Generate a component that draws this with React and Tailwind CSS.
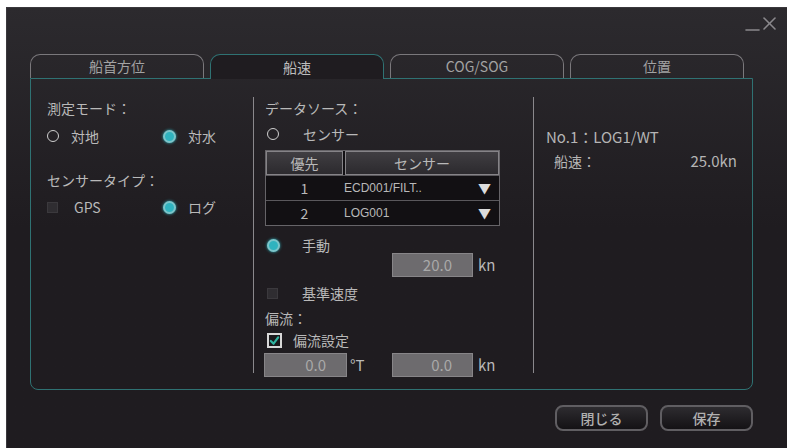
import { Fragment } from 'react'

const FONT = { fontFamily: '"Noto Sans CJK JP", "Noto Sans", sans-serif' }

const TABS = ['船首方位', '船速', 'COG/SOG', '位置']

const SENSORS = [
  { no: 1, name: 'ECD001/FILT..' },
  { no: 2, name: 'LOG001' },
]

export default function App() {
  return (
    <div className="w-[787px] h-[448px] bg-white pl-[6px] pt-[7px] overflow-hidden" style={FONT}>
      <div className="w-[781px] h-[441px] flex flex-col bg-gradient-to-b from-[#2c2a2e] via-[#1f1c20] to-[#1f1c20] border-l border-t border-[#3a383c]">
        {/* Title bar */}
        <div className="h-[46px] flex justify-end pr-[9px] pt-[5px]">
          <WindowControls />
        </div>

        {/* Tabs */}
        <div className="relative z-10 flex items-end gap-[6px] pl-[23px] h-[24px]">
          {TABS.map((t, i) => (
            <div
              key={t}
              className={`w-[174px] flex items-center justify-center rounded-t-[10px] border border-b-0 text-[14px] ${
                i === 1
                  ? 'h-[25px] -mb-px bg-[#1f1c20] border-[#2f7273] text-[#bdbdbd]'
                  : 'h-[24px] border-[#7a787c] text-[#a3a3a3]'
              }`}
            >
              {t}
            </div>
          ))}
        </div>

        {/* Panel */}
        <div className="ml-[23px] w-[723px] h-[312px] flex border border-[#2f7273] rounded-b-[8px] text-[14px] text-[#b9b9b9]">
          <LeftColumn />
          <div className="w-px h-[276px] mt-[18px] bg-[#8a888c]" />
          <MiddleColumn />
          <div className="w-px h-[276px] mt-[18px] bg-[#8a888c]" />
          <RightColumn />
        </div>

        {/* Buttons */}
        <div className="flex justify-end gap-[12px] pr-[34px] mt-[15px]">
          <Button label="閉じる" />
          <Button label="保存" />
        </div>
      </div>
    </div>
  )
}

function LeftColumn() {
  return (
    <div className="w-[222px] pl-[16px] pt-[19px] flex flex-col">
      <div className="h-[20px] flex items-center">測定モード：</div>
      <div className="mt-[8px] h-[20px] flex items-center">
        <div className="w-[116px] flex items-center gap-[12px]">
          <Radio />
          <span>対地</span>
        </div>
        <div className="flex items-center gap-[12px]">
          <Radio checked />
          <span>対水</span>
        </div>
      </div>
      <div className="mt-[24px] h-[20px] flex items-center">センサータイプ：</div>
      <div className="mt-[7px] h-[20px] flex items-center">
        <div className="w-[116px] flex items-center gap-[16px]">
          <DisabledBox />
          <span>GPS</span>
        </div>
        <div className="flex items-center gap-[12px]">
          <Radio checked />
          <span>ログ</span>
        </div>
      </div>
    </div>
  )
}

function MiddleColumn() {
  return (
    <div className="w-[279px] pl-[11px] pt-[19px] flex flex-col">
      <div className="h-[20px] flex items-center">データソース：</div>
      <div className="mt-[6px] h-[20px] flex items-center gap-[24px] pl-[2px]">
        <Radio />
        <span>センサー</span>
      </div>

      {/* Sensor priority table */}
      <div className="mt-[6px] w-[235px] border border-[#666468] bg-[#121013] flex flex-col">
        <div className="flex h-[24px] gap-[2px] bg-[#121013]">
          <div className="w-[77px] flex items-center justify-center border border-[#858387] bg-gradient-to-b from-[#403e42] to-[#2c2a2e]">優先</div>
          <div className="flex-1 flex items-center justify-center border border-[#858387] bg-gradient-to-b from-[#403e42] to-[#2c2a2e]">センサー</div>
        </div>
        {SENSORS.map((s) => (
          <Fragment key={s.no}>
            <div className="h-px bg-[#5a585c]" />
            <div className="flex h-[24px] items-center text-[#b9b9b9]">
              <div className="w-[77px] text-center text-[14px]">{s.no}</div>
              <div className="flex-1 pl-[1px] text-[12px]" style={{ fontFamily: '"Liberation Sans", Arial, sans-serif' }}>
                {s.name}
              </div>
              <span className="pr-[8px] text-[13px] text-[#dcdcdc]">▼</span>
            </div>
          </Fragment>
        ))}
      </div>

      <div className="mt-[11px] h-[16px] flex items-center gap-[22px] pl-[2px]">
        <Radio checked />
        <span>手動</span>
      </div>
      <div className="h-[24px] flex items-center pl-[127px]">
        <Field value="20.0" width="w-[81px]" />
        <span className="ml-[5px] text-[15px]">kn</span>
      </div>
      <div className="mt-[6px] h-[20px] flex items-center gap-[24px] pl-[2px]">
        <DisabledBox />
        <span>基準速度</span>
      </div>
      <div className="mt-[5px] h-[20px] flex items-center">偏流：</div>
      <div className="mt-[2px] h-[20px] flex items-center gap-[11px] pl-[2px]">
        <CheckBox />
        <span>偏流設定</span>
      </div>
      <div className="mt-[3px] h-[24px] flex items-center -ml-[1px]">
        <Field value="0.0" width="w-[83px]" />
        <span className="w-[45px] pl-[3px] text-[15px]">°T</span>
        <Field value="0.0" width="w-[81px]" />
        <span className="ml-[5px] text-[15px]">kn</span>
      </div>
    </div>
  )
}

function RightColumn() {
  return (
    <div className="flex-1 pl-[12px] pr-[15px] pt-[48px] flex flex-col text-[#b5b5b5]">
      <div className="h-[20px] flex items-center text-[15px]">No.1：LOG1/WT</div>
      <div className="mt-[4px] h-[20px] flex items-center justify-between pl-[8px] text-[15px]">
        <span className="text-[14px]">船速：</span>
        <span>25.0kn</span>
      </div>
    </div>
  )
}

// ── Controls ───────────────────────────────────────────────────────────────

function Radio({ checked = false }) {
  if (checked) {
    return (
      <span className="w-[13px] h-[13px] shrink-0 rounded-full border-2 border-[#7cc4c9] bg-[#2fb3bf] shadow-[0_0_3px_#2fb3bf]" />
    )
  }
  return <span className="w-[12px] h-[12px] shrink-0 rounded-full border-[1.5px] border-[#cfcfcf]" />
}

function DisabledBox() {
  return <span className="w-[11px] h-[11px] shrink-0 bg-[#2f2d31] border border-[#3b393d]" />
}

function CheckBox() {
  return (
    <span className="w-[15px] h-[15px] shrink-0 flex items-center justify-center border-2 border-[#d8d8d8] bg-[#1a181b]">
      <svg width="11" height="11" viewBox="0 0 12 12" fill="none" stroke="#2fb3a0" strokeWidth="2.4" strokeLinecap="round" strokeLinejoin="round">
        <polyline points="2 6.5 5 9.5 10 2.5" />
      </svg>
    </span>
  )
}

function Field({ value, width }) {
  return (
    <div className={`${width} h-[24px] flex items-center justify-end pr-[20px] bg-[#6d6b6e] border border-[#878588] text-[15px] text-[#a9a9a9]`}>
      {value}
    </div>
  )
}

function Button({ label }) {
  return (
    <button className="w-[93px] h-[26px] rounded-[8px] border-2 border-[#605e62] bg-gradient-to-b from-[#2e2c30] to-[#141215] text-[14px] font-medium text-[#b0b0b0]">
      {label}
    </button>
  )
}

function WindowControls() {
  return (
    <svg width="34" height="20" viewBox="0 0 34 20" fill="none" stroke="#8a888c" strokeWidth="1.6" strokeLinecap="round">
      <line x1="2" y1="17" x2="15" y2="17" />
      <line x1="20" y1="5" x2="31" y2="16" />
      <line x1="31" y1="5" x2="20" y2="16" />
    </svg>
  )
}
